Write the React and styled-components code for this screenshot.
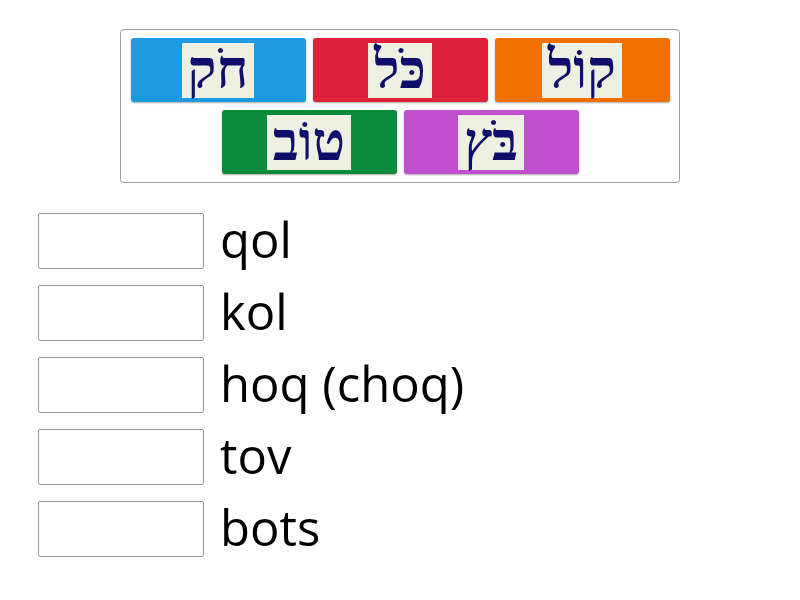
import React from 'react';
import styled, { createGlobalStyle } from 'styled-components';

const GlobalStyle = createGlobalStyle`
  html, body {
    margin: 0;
    padding: 0;
    background: #fff;
  }
  body {
    font-family: 'Open Sans', 'Liberation Sans', sans-serif;
  }
`;

const Page = styled.div`
  width: 800px;
  height: 600px;
  padding-top: 29px;
  box-sizing: border-box;
`;

const Bank = styled.div`
  width: 560px;
  margin: 0 auto;
  box-sizing: border-box;
  padding: 8px 9px;
  border: 1px solid #a0a0a0;
  border-radius: 4px;
  display: flex;
  flex-wrap: wrap;
  justify-content: center;
  gap: 8px 7px;
`;

const Tile = styled.div`
  width: 175px;
  height: 64px;
  border-radius: 3px;
  background: ${p => p.color};
  box-shadow: 0 1px 2px rgba(0, 0, 0, 0.35);
  display: flex;
  align-items: center;
  justify-content: center;
`;

const Word = styled.span`
  height: 55px;
  padding: 0 6px;
  background: #eef0e1;
  color: #0f0f6b;
  font-family: 'Liberation Serif', 'DejaVu Sans', serif;
  font-weight: bold;
  font-size: 54px;
  line-height: 55px;
  direction: rtl;
`;

const List = styled.div`
  margin: 30px 0 0 38px;
  display: flex;
  flex-direction: column;
  gap: 16px;
`;

const Row = styled.div`
  display: flex;
  align-items: center;
  gap: 16px;
`;

const Slot = styled.div`
  width: 166px;
  height: 56px;
  box-sizing: border-box;
  border: 1px solid #9a9a9a;
  border-radius: 2px;
  background: #fff;
`;

const Label = styled.span`
  font-family: 'Open Sans', sans-serif;
  font-size: 49px;
  color: #000;
  line-height: 52px;
  margin-bottom: 4px;
`;

const tiles = [
  { text: 'חֹק', color: '#1c9be0' },
  { text: 'כֹּל', color: '#dc2139' },
  { text: 'קוֹל', color: '#f07000' },
  { text: 'טוֹב', color: '#0c8a3c' },
  { text: 'בֹּץ', color: '#c24fce' },
];

const answers = ['qol', 'kol', 'hoq (choq)', 'tov', 'bots'];

export default function App() {
  return (
    <Page>
      <GlobalStyle />
      <Bank>
        {tiles.map(t => (
          <Tile key={t.text} color={t.color}>
            <Word>{t.text}</Word>
          </Tile>
        ))}
      </Bank>
      <List>
        {answers.map(a => (
          <Row key={a}>
            <Slot />
            <Label>{a}</Label>
          </Row>
        ))}
      </List>
    </Page>
  );
}
